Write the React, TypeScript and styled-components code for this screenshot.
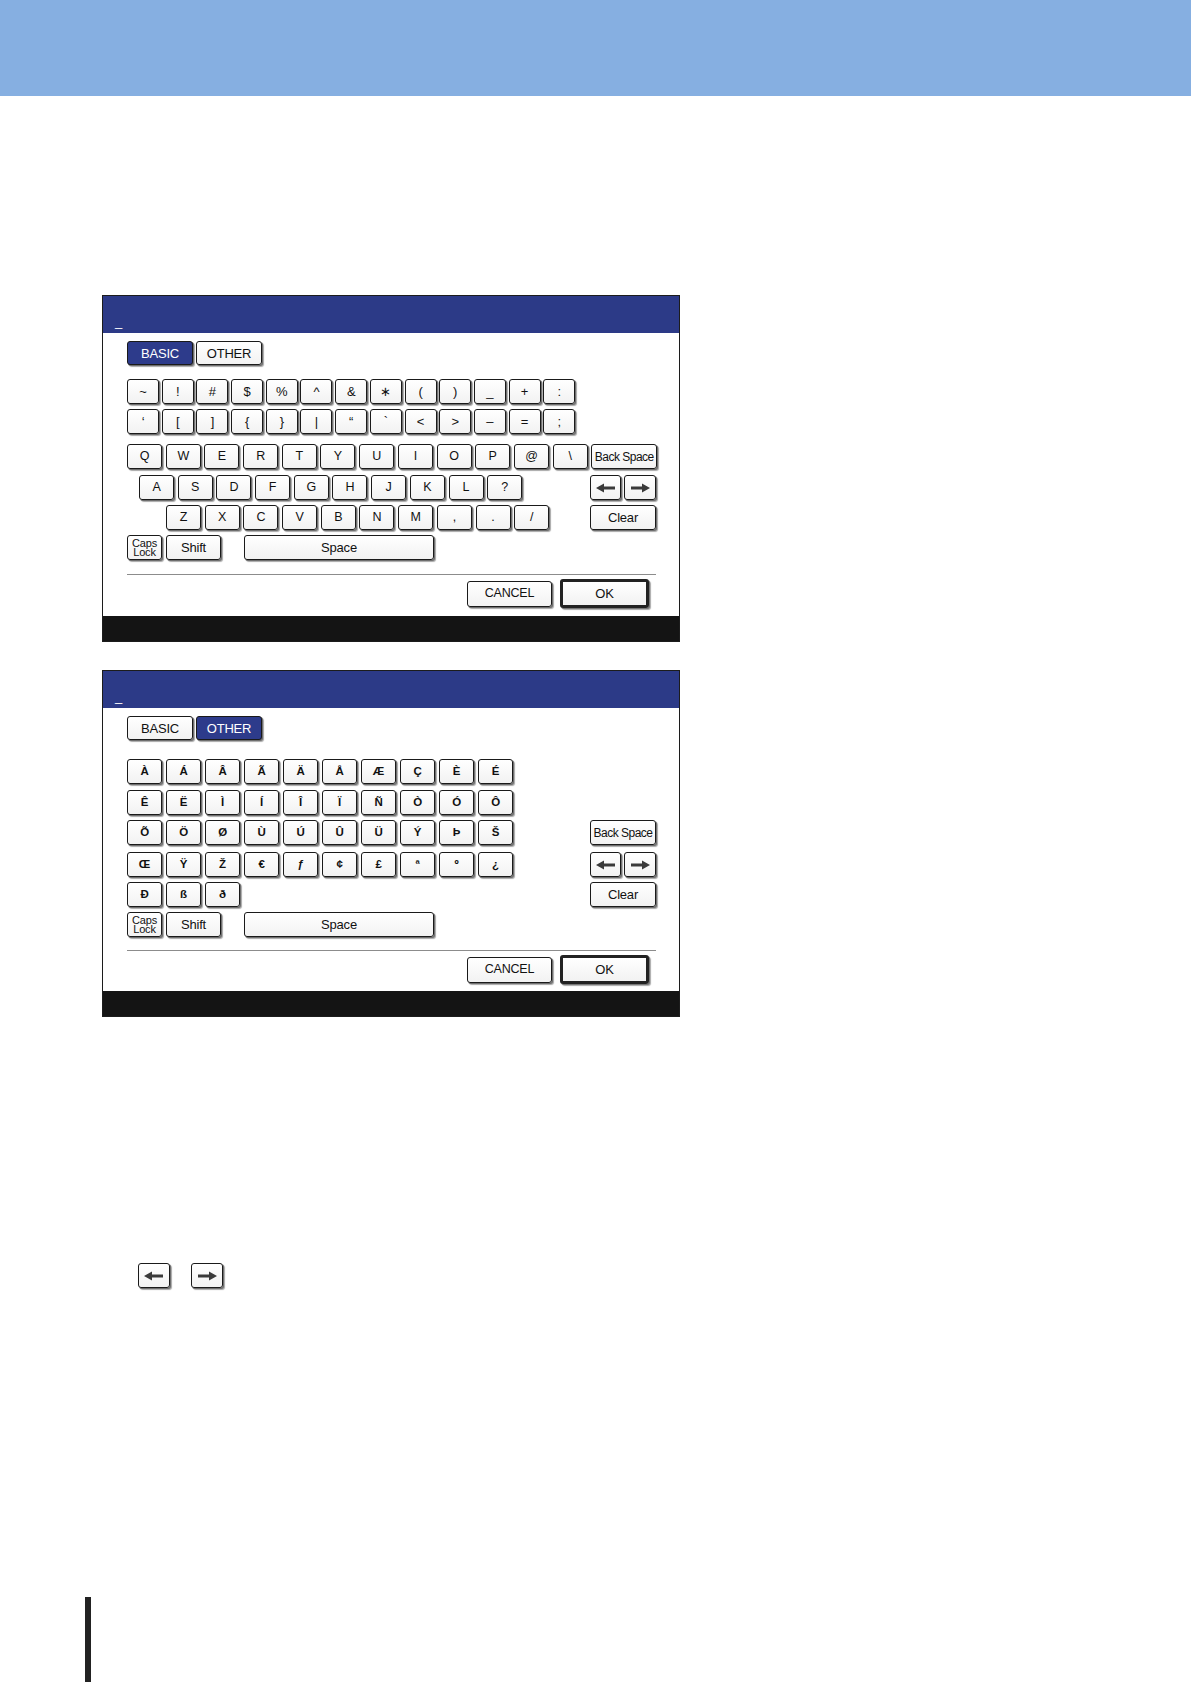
import React from "react";
import styled, { createGlobalStyle } from "styled-components";

const GlobalStyle = createGlobalStyle`
  html, body {
    margin: 0;
    padding: 0;
    background: #fff;
  }
  body {
    font-family: "Liberation Sans", Arial, sans-serif;
    color: #111;
  }
`;

const Page = styled.div`
  width: 1191px;
  min-height: 1684px;
  display: flex;
  flex-direction: column;
  overflow: hidden;
`;

const Banner = styled.div`
  height: 96px;
  flex-shrink: 0;
  background: #86afe1;
`;

const Panel = styled.div<{ $top: number }>`
  margin: ${(p) => p.$top}px 0 0 102px;
  width: 578px;
  height: 347px;
  box-sizing: border-box;
  border: 1px solid #1c1c1c;
  display: flex;
  flex-direction: column;
  background: #fff;
  flex-shrink: 0;
`;

const TitleBar = styled.div`
  height: 37px;
  flex-shrink: 0;
  box-sizing: border-box;
  background: #2c3a87;
  color: #fff;
  display: flex;
  align-items: flex-end;
  padding: 0 0 5px 12px;
  font-size: 13px;
  line-height: 13px;
`;

const Body = styled.div`
  flex: 1;
  box-sizing: border-box;
  padding: 8px 23px 0 24px;
  display: flex;
  flex-direction: column;
`;

const Footer = styled.div`
  height: 25px;
  flex-shrink: 0;
  background: #141414;
`;

const Tabs = styled.div`
  display: flex;
  gap: 3px;
`;

const KeyRow = styled.div<{ $mt: number; $indent?: number; $gap: number }>`
  display: flex;
  align-items: flex-start;
  margin-top: ${(p) => p.$mt}px;
  padding-left: ${(p) => p.$indent ?? 0}px;
  gap: ${(p) => p.$gap}px;
  height: 25px;
`;

const RightSlot = styled.div`
  margin-left: auto;
  display: flex;
  gap: 3px;
`;

const Key = styled.div<{ $w: number; $h?: number; $on?: boolean; $size?: number; $bold?: boolean; $ml?: number }>`
  width: ${(p) => p.$w}px;
  height: ${(p) => p.$h ?? 25}px;
  margin-left: ${(p) => p.$ml ?? 0}px;
  flex-shrink: 0;
  box-sizing: border-box;
  border: 1px solid #1a1a1a;
  border-radius: 3px;
  background: ${(p) => (p.$on ? "#2d3b8b" : "linear-gradient(#ffffff, #f2f2f2)")};
  color: ${(p) => (p.$on ? "#fff" : "#111")};
  box-shadow: 1px 1px 0 #6f6f6f, 2px 2px 1px #a8a8a8;
  display: flex;
  align-items: center;
  justify-content: center;
  font-size: ${(p) => p.$size ?? 12.5}px;
  font-weight: ${(p) => (p.$bold ? 700 : 400)};
  letter-spacing: -0.2px;
  line-height: 1;
  white-space: nowrap;
  user-select: none;
`;

const OkKey = styled(Key)`
  border: 3px solid #222;
  box-shadow: 1px 1px 0 #777, 2px 2px 1px #aaa;
`;

const NarrowLabel = styled.span`
  letter-spacing: -0.5px;
`;

const CapsLabel = styled.span`
  display: flex;
  flex-direction: column;
  align-items: center;
  font-size: 11px;
  line-height: 9px;
  letter-spacing: -0.2px;
`;

const Separator = styled.div<{ $mt: number }>`
  margin-top: ${(p) => p.$mt}px;
  height: 1px;
  background: #8c8c8c;
`;

const ButtonRow = styled.div`
  margin-top: 4px;
  display: flex;
  justify-content: flex-end;
  align-items: center;
  gap: 8px;
  padding-right: 7px;
`;

const ArrowPair = styled.div`
  margin: 246px 0 0 138px;
  display: flex;
  gap: 21px;
`;

const EdgeBar = styled.div`
  margin: 309px 0 0 85px;
  width: 6px;
  height: 85px;
  flex-shrink: 0;
  background: #222;
`;

const Arrow = ({ dir }: { dir: "left" | "right" }) => (
  <svg width="20" height="10" viewBox="0 0 20 10">
    <polygon
      points={
        dir === "left"
          ? "0,5 8,0.5 8,3.5 19,3.5 19,6.5 8,6.5 8,9.5"
          : "20,5 12,0.5 12,3.5 1,3.5 1,6.5 12,6.5 12,9.5"
      }
      fill="#3a3a3a"
    />
  </svg>
);

const Title = () => (
  <TitleBar>
    <span>_</span>
  </TitleBar>
);

const ModeTabs = ({ active }: { active: "basic" | "other" }) => (
  <Tabs>
    <Key $w={66} $h={24} $size={13} $on={active === "basic"}>BASIC</Key>
    <Key $w={66} $h={24} $size={13} $on={active === "other"}>OTHER</Key>
  </Tabs>
);

const BackSpace = () => (
  <RightSlot>
    <Key $w={66} $size={12}>
      <NarrowLabel>Back Space</NarrowLabel>
    </Key>
  </RightSlot>
);

const Cursors = () => (
  <RightSlot>
    <Key $w={31}><Arrow dir="left" /></Key>
    <Key $w={32}><Arrow dir="right" /></Key>
  </RightSlot>
);

const ClearKey = () => (
  <RightSlot>
    <Key $w={66} $size={13}>Clear</Key>
  </RightSlot>
);

const BottomRow = ({ mt }: { mt: number }) => (
  <KeyRow $mt={mt} $gap={4}>
    <Key $w={35}>
      <CapsLabel>
        <span>Caps</span>
        <span>Lock</span>
      </CapsLabel>
    </Key>
    <Key $w={55} $size={13}>Shift</Key>
    <Key $w={190} $size={13} $ml={19}>Space</Key>
  </KeyRow>
);

const Actions = ({ sep }: { sep: number }) => (
  <>
    <Separator $mt={sep} />
    <ButtonRow>
      <Key $w={85} $h={26} $size={12.5}>CANCEL</Key>
      <OkKey $w={89} $h={29} $size={13}>OK</OkKey>
    </ButtonRow>
  </>
);

const symbols1 = ["~", "!", "#", "$", "%", "^", "&", "∗", "(", ")", "_", "+", ":"];
const symbols2 = ["‘", "[", "]", "{", "}", "|", "“", "`", "<", ">", "–", "=", ";"];
const rowQ = ["Q", "W", "E", "R", "T", "Y", "U", "I", "O", "P", "@", "\\"];
const rowA = ["A", "S", "D", "F", "G", "H", "J", "K", "L", "?"];
const rowZ = ["Z", "X", "C", "V", "B", "N", "M", ",", ".", "/"];

const other = [
  ["À", "Á", "Â", "Ã", "Ä", "Å", "Æ", "Ç", "È", "É"],
  ["Ê", "Ë", "Ì", "Í", "Î", "Ï", "Ñ", "Ò", "Ó", "Ô"],
  ["Õ", "Ö", "Ø", "Ù", "Ú", "Û", "Ü", "Ý", "Þ", "Š"],
  ["Œ", "Ÿ", "Ž", "€", "ƒ", "¢", "£", "ª", "º", "¿"],
  ["Ð", "ß", "ð"],
];

const BasicKeyboard = () => (
  <Panel $top={199}>
    <Title />
    <Body>
      <ModeTabs active="basic" />
      <KeyRow $mt={14} $gap={2.7}>
        {symbols1.map((k) => (
          <Key key={k} $w={32} $size={13}>{k}</Key>
        ))}
      </KeyRow>
      <KeyRow $mt={5} $gap={2.7}>
        {symbols2.map((k) => (
          <Key key={k} $w={32} $size={13}>{k}</Key>
        ))}
      </KeyRow>
      <KeyRow $mt={10} $gap={3.7}>
        {rowQ.map((k) => (
          <Key key={k} $w={35}>{k}</Key>
        ))}
        <BackSpace />
      </KeyRow>
      <KeyRow $mt={6} $gap={3.7} $indent={12}>
        {rowA.map((k) => (
          <Key key={k} $w={35}>{k}</Key>
        ))}
        <Cursors />
      </KeyRow>
      <KeyRow $mt={5} $gap={3.7} $indent={39}>
        {rowZ.map((k) => (
          <Key key={k} $w={35}>{k}</Key>
        ))}
        <ClearKey />
      </KeyRow>
      <BottomRow mt={5} />
      <Actions sep={14} />
    </Body>
    <Footer />
  </Panel>
);

const OtherKeyboard = () => (
  <Panel $top={28}>
    <Title />
    <Body>
      <ModeTabs active="other" />
      {other.map((row, i) => (
        <KeyRow key={i} $mt={[19, 6, 5, 7, 5][i]} $gap={4}>
          {row.map((k) => (
            <Key key={k} $w={35} $size={11.5} $bold>{k}</Key>
          ))}
          {i === 2 && <BackSpace />}
          {i === 3 && <Cursors />}
          {i === 4 && <ClearKey />}
        </KeyRow>
      ))}
      <BottomRow mt={5} />
      <Actions sep={13} />
    </Body>
    <Footer />
  </Panel>
);

export default function App() {
  return (
    <>
      <GlobalStyle />
      <Page>
        <Banner />
        <BasicKeyboard />
        <OtherKeyboard />
        <ArrowPair>
          <Key $w={32}><Arrow dir="left" /></Key>
          <Key $w={32}><Arrow dir="right" /></Key>
        </ArrowPair>
        <EdgeBar />
      </Page>
    </>
  );
}
